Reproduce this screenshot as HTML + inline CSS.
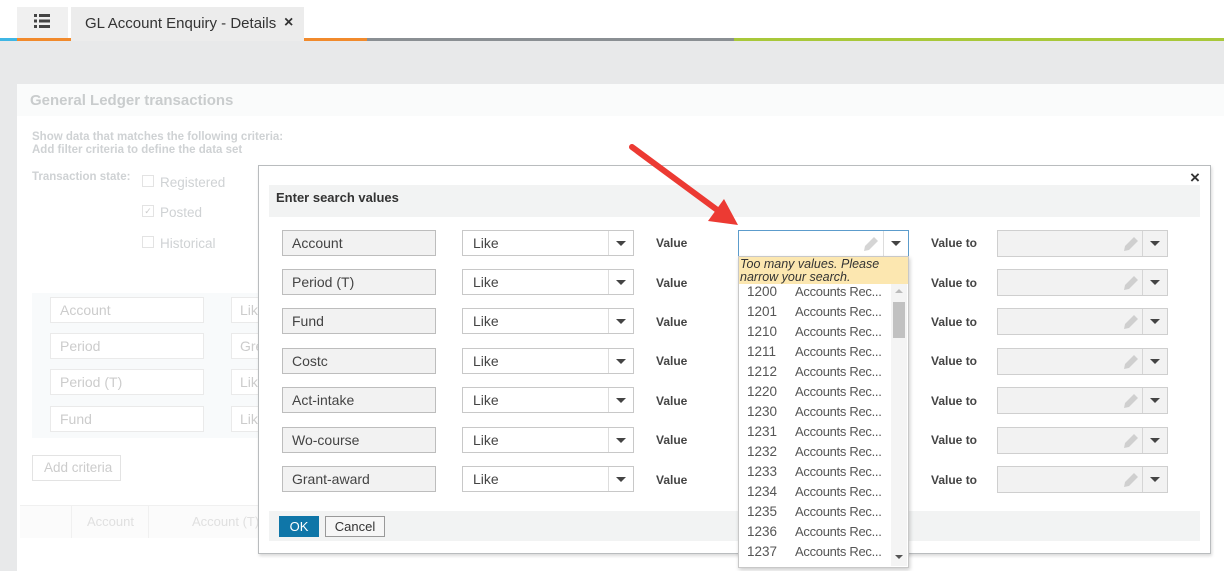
<!DOCTYPE html>
<html><head><meta charset="utf-8"><style>
*{box-sizing:border-box;margin:0;padding:0}
body{width:1224px;height:571px;overflow:hidden;position:relative;background:#e8e9ea;font-family:"Liberation Sans",sans-serif;font-size:13px;color:#333}
.a{position:absolute}
.top{left:0;top:0;width:1224px;height:38px;background:#fff}
.fld{position:absolute;height:26px;border:1px solid #bdbdbd;background:#f2f2f2;padding-left:9px;line-height:24px;font-size:14px;color:#444}
.sel{position:absolute;height:26px;border:1px solid #c8c8c8;background:#fff;padding-left:10px;line-height:24px;font-size:14px;color:#444}
.tri{position:absolute;width:0;height:0;border-left:5px solid transparent;border-right:5px solid transparent;border-top:5px solid #444}
.lbl{position:absolute;font-size:12px;font-weight:bold;color:#444}
.bg{color:#cfd2d4}
.li{position:absolute;left:747px;font-size:13.5px;color:#555}
.li span{position:absolute;left:48px;white-space:nowrap;font-size:13px;letter-spacing:-0.3px}
</style></head><body>
<div class="a top"></div>
<div class="a" style="left:0;top:38px;width:17px;height:3px;background:#3fb6e4"></div>
<div class="a" style="left:17px;top:38px;width:54px;height:3px;background:#f18a2c"></div>
<div class="a" style="left:304px;top:38px;width:63px;height:3px;background:#f18a2c"></div>
<div class="a" style="left:367px;top:38px;width:367px;height:3px;background:#8a8f93"></div>
<div class="a" style="left:734px;top:38px;width:490px;height:3px;background:#a8c83a"></div>
<div class="a" style="left:17px;top:7px;width:51px;height:31px;background:#f0f0f0"></div>
<svg class="a" style="left:34px;top:14px" width="16" height="14"><g fill="#444"><rect x="0" y="0" width="3" height="3"/><rect x="5" y="0" width="11" height="3"/><rect x="0" y="5.5" width="3" height="3"/><rect x="5" y="5.5" width="11" height="3"/><rect x="0" y="11" width="3" height="3"/><rect x="5" y="11" width="11" height="3"/></g></svg>
<div class="a" style="left:71px;top:7px;width:233px;height:34px;background:#ececec"></div>
<div class="a" style="left:85px;top:15px;font-size:15px;color:#333">GL Account Enquiry - Details</div>
<div class="a" style="left:284px;top:14px;font-size:16px;font-weight:bold;color:#333">×</div>

<div class="a" style="left:17px;top:84px;width:1207px;height:487px;background:#fff"></div>
<div class="a" style="left:17px;top:84px;width:1207px;height:32px;background:#fafbfb"></div>
<div class="a bg" style="left:30px;top:92px;font-size:15px;font-weight:bold;color:#c9cccd">General Ledger transactions</div>
<div class="a bg" style="left:32px;top:131px;font-size:11.5px;font-weight:bold;line-height:13px">Show data that matches the following criteria:<br>Add filter criteria to define the data set</div>
<div class="a bg" style="left:32px;top:171px;font-size:11.5px;font-weight:bold">Transaction state:</div>
<div class="a" style="left:142px;top:175px;width:12px;height:12px;border:1px solid #e3e3e3"></div>
<div class="a bg" style="left:160px;top:175px;font-size:13.5px">Registered</div>
<div class="a" style="left:142px;top:205px;width:12px;height:12px;border:1px solid #e3e3e3;font-size:9px;color:#ccc;line-height:10px;text-align:center">✓</div>
<div class="a bg" style="left:160px;top:205px;font-size:13.5px">Posted</div>
<div class="a" style="left:142px;top:236px;width:12px;height:12px;border:1px solid #e3e3e3"></div>
<div class="a bg" style="left:160px;top:236px;font-size:13.5px">Historical</div>
<div class="a" style="left:32px;top:293px;width:230px;height:145px;background:#f8fafb"></div>
<div class="a" style="left:50px;top:297px;width:154px;height:26px;border:1px solid #eaeaea;background:#fff;padding-left:9px;line-height:24px;color:#ccc;font-size:14px">Account</div>
<div class="a" style="left:50px;top:333px;width:154px;height:26px;border:1px solid #eaeaea;background:#fff;padding-left:9px;line-height:24px;color:#ccc;font-size:14px">Period</div>
<div class="a" style="left:50px;top:369px;width:154px;height:26px;border:1px solid #eaeaea;background:#fff;padding-left:9px;line-height:24px;color:#ccc;font-size:14px">Period (T)</div>
<div class="a" style="left:50px;top:406px;width:154px;height:26px;border:1px solid #eaeaea;background:#fff;padding-left:9px;line-height:24px;color:#ccc;font-size:14px">Fund</div>
<div class="a" style="left:231px;top:297px;width:30px;height:26px;border:1px solid #eaeaea;border-right:0;background:#fff;padding-left:8px;line-height:24px;color:#ccc;font-size:14px;overflow:hidden">Like</div>
<div class="a" style="left:231px;top:333px;width:30px;height:26px;border:1px solid #eaeaea;border-right:0;background:#fff;padding-left:8px;line-height:24px;color:#ccc;font-size:14px;overflow:hidden">Gre</div>
<div class="a" style="left:231px;top:369px;width:30px;height:26px;border:1px solid #eaeaea;border-right:0;background:#fff;padding-left:8px;line-height:24px;color:#ccc;font-size:14px;overflow:hidden">Like</div>
<div class="a" style="left:231px;top:406px;width:30px;height:26px;border:1px solid #eaeaea;border-right:0;background:#fff;padding-left:8px;line-height:24px;color:#ccc;font-size:14px;overflow:hidden">Like</div>
<div class="a" style="left:32px;top:455px;width:89px;height:26px;border:1px solid #e3e3e3;padding-left:11px;line-height:24px;color:#ccc;font-size:13.5px">Add criteria</div>
<div class="a" style="left:20px;top:505px;width:240px;height:33px;background:#fbfbfb;border-top:1px solid #f0f0f0"></div>
<div class="a" style="left:71px;top:505px;width:1px;height:33px;background:#f0f0f0"></div>
<div class="a" style="left:148px;top:505px;width:1px;height:33px;background:#f0f0f0"></div>
<div class="a bg" style="left:87px;top:514px;font-size:13px;color:#e0e0e0">Account</div>
<div class="a bg" style="left:192px;top:514px;font-size:13px;color:#e0e0e0">Account (T)</div>

<div class="a" style="left:258px;top:165px;width:953px;height:389px;background:#fff;border:1px solid #b9bcbe;box-shadow:1px 2px 3px rgba(0,0,0,.15)"></div>
<div class="a" style="left:1190px;top:168px;font-size:17px;font-weight:bold;color:#333">×</div>
<div class="a" style="left:269px;top:185px;width:931px;height:32px;background:#f2f3f3"></div>
<div class="a" style="left:276px;top:190px;font-size:13px;font-weight:bold;color:#333">Enter search values</div>

<div class="a" style="left:269px;top:511px;width:931px;height:30px;background:#f2f3f3"></div>
<div class="a" style="left:279px;top:516px;width:40px;height:21px;background:#0f76a8;color:#fff;font-size:13px;line-height:21px;text-align:center">OK</div>
<div class="a" style="left:325px;top:516px;width:60px;height:21px;border:1px solid #999;background:#f6f6f6;font-size:13px;line-height:19px;text-align:center;color:#333">Cancel</div>

<div class="fld" style="left:282px;top:230px;width:154px">Account</div>
<div class="fld" style="left:282px;top:269px;width:154px">Period (T)</div>
<div class="fld" style="left:282px;top:308px;width:154px">Fund</div>
<div class="fld" style="left:282px;top:348px;width:154px">Costc</div>
<div class="fld" style="left:282px;top:387px;width:154px">Act-intake</div>
<div class="fld" style="left:282px;top:427px;width:154px">Wo-course</div>
<div class="fld" style="left:282px;top:466px;width:154px">Grant-award</div>

<div class="sel" style="left:462px;top:230px;width:172px">Like</div>
<div class="sel" style="left:462px;top:269px;width:172px">Like</div>
<div class="sel" style="left:462px;top:308px;width:172px">Like</div>
<div class="sel" style="left:462px;top:348px;width:172px">Like</div>
<div class="sel" style="left:462px;top:387px;width:172px">Like</div>
<div class="sel" style="left:462px;top:427px;width:172px">Like</div>
<div class="sel" style="left:462px;top:466px;width:172px">Like</div>

<div class="lbl" style="left:656px;top:236px">Value</div>
<div class="lbl" style="left:656px;top:276px">Value</div>
<div class="lbl" style="left:656px;top:315px">Value</div>
<div class="lbl" style="left:656px;top:354px">Value</div>
<div class="lbl" style="left:656px;top:394px">Value</div>
<div class="lbl" style="left:656px;top:433px">Value</div>
<div class="lbl" style="left:656px;top:473px">Value</div>

<div class="lbl" style="left:931px;top:236px">Value to</div>
<div class="lbl" style="left:931px;top:276px">Value to</div>
<div class="lbl" style="left:931px;top:315px">Value to</div>
<div class="lbl" style="left:931px;top:354px">Value to</div>
<div class="lbl" style="left:931px;top:394px">Value to</div>
<div class="lbl" style="left:931px;top:433px">Value to</div>
<div class="lbl" style="left:931px;top:473px">Value to</div>

<div id="rows"></div>
<script>
var tops=[230,269,308,348,387,427,466],h='';
tops.forEach(function(t,i){
 h+='<div class="a" style="left:608px;top:'+(t+1)+'px;width:1px;height:24px;background:#ddd"></div><div class="tri" style="left:616px;top:'+(t+11)+'px"></div>';
 h+='<div class="a" style="left:997px;top:'+t+'px;width:171px;height:27px;border:1px solid #cfcfcf;background:#f2f2f2"></div><div class="a" style="left:1142px;top:'+(t+1)+'px;width:1px;height:25px;background:#d5d5d5"></div><div class="tri" style="left:1150px;top:'+(t+11)+'px"></div>';
 h+='<svg class="a" style="left:1122px;top:'+(t+5)+'px" width="18" height="18"><path d="M2 16 L3 11 L12 2 L16 6 L7 15 Z" fill="#cfcfcf"/></svg>';
});
document.getElementById('rows').innerHTML=h;
</script>

<div class="a" style="left:738px;top:230px;width:171px;height:27px;border:1px solid #5c9ccc;background:#fff"></div>
<div class="a" style="left:883px;top:231px;width:1px;height:25px;background:#ddd"></div>
<div class="tri" style="left:891px;top:241px"></div>
<svg class="a" style="left:862px;top:235px" width="18" height="18"><path d="M2 16 L3 11 L12 2 L16 6 L7 15 Z" fill="#d5d5d5"/></svg>

<div class="a" style="left:738px;top:256px;width:171px;height:312px;background:#fff;border:1px solid #c8c8c8;box-shadow:1px 2px 4px rgba(0,0,0,.2);overflow:hidden">
 <div style="height:27px;background:#fce7b0;font-size:12.5px;font-style:italic;line-height:13px;padding:1px 0 0 1px;color:#333">Too many values. Please narrow your search.</div>
</div>
<div class="a" style="left:891px;top:284px;width:16px;height:282px;background:#f4f4f4"></div>
<div class="a" style="left:893px;top:302px;width:12px;height:36px;background:#c1c1c1"></div>
<div class="a" style="left:895px;top:289px;width:0;height:0;border-left:4px solid transparent;border-right:4px solid transparent;border-bottom:4px solid #bbb"></div>
<div class="a" style="left:895px;top:555px;width:0;height:0;border-left:4px solid transparent;border-right:4px solid transparent;border-top:4px solid #555"></div>
<div id="list"></div>
<script>
var c=['1200','1201','1210','1211','1212','1220','1230','1231','1232','1233','1234','1235','1236','1237'],s='';
c.forEach(function(v,i){s+='<div class="li" style="top:'+(284+i*20)+'px">'+v+'<span>Accounts Rec...</span></div>';});
document.getElementById('list').innerHTML=s;
</script>

<svg class="a" style="left:620px;top:135px" width="130" height="100"><line x1="12" y1="12" x2="100" y2="77" stroke="#ec3a33" stroke-width="6" stroke-linecap="round"/><path d="M118 90 L88 86 L104 64 Z" fill="#ec3a33"/></svg>
</body></html>
